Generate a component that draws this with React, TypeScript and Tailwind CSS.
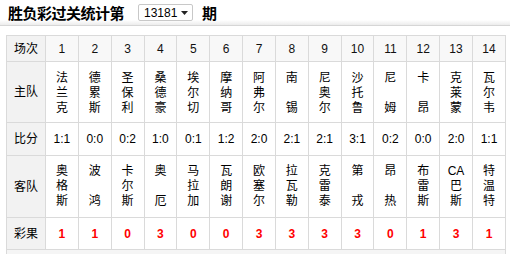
import React from "react";

const home = ["法兰克", "德累斯", "圣保利", "桑德豪", "埃尔切", "摩纳哥", "阿弗尔", "南锡", "尼奥尔", "沙托鲁", "尼姆", "卡昂", "克莱蒙", "瓦尔韦"];
const away = ["奥格斯", "波鸿", "卡尔斯", "奥厄", "马拉加", "瓦朗谢", "欧塞尔", "拉瓦勒", "克雷泰", "第戎", "昂热", "布雷斯", "CA巴斯", "特温特"];
const scores = ["1:1", "0:0", "0:2", "1:0", "0:1", "1:2", "2:0", "2:1", "2:1", "3:1", "0:2", "0:0", "2:0", "1:1"];
const results = ["1", "1", "0", "3", "0", "0", "3", "3", "3", "3", "0", "1", "3", "1"];

function lines(name: string): string[] {
  if (name.startsWith("CA")) return ["CA", name[2], name[3]];
  const chars = Array.from(name);
  if (chars.length === 2) return [chars[0], "\u00a0", chars[1]];
  return chars;
}

function Name({ name }: { name: string }) {
  return (
    <div className="flex flex-col items-center leading-[15px]">
      {lines(name).map((c, i) => (
        <span key={i}>{c}</span>
      ))}
    </div>
  );
}

const label = "border border-[#dadada] bg-[#f2f2f2] text-center text-[12px] text-black";
const cell = "border border-[#dadada] text-center text-[12px]";

export default function App() {
  return (
    <div className="w-[510px] h-[254px] bg-white overflow-hidden" style={{ fontFamily: '"Liberation Sans", "Noto Sans CJK SC", sans-serif' }}>
      <div className="h-[26px] flex items-center pl-[8px] border-b border-[#d6d6d6] bg-gradient-to-b from-white from-80% to-[#ececec]">
        <span className="text-[15px] font-bold text-black leading-none tracking-[-0.5px]" style={{ fontFamily: '"Noto Sans CJK SC", sans-serif' }}>胜负彩过关统计第</span>
        <div className="ml-[14px] w-[55px] h-[17px] border border-[#c8c8c8] rounded-[2px] bg-white flex items-center pl-[5px] pr-[4px] justify-between">
          <span className="text-[12px] text-black leading-none">13181</span>
          <svg width="7" height="4" viewBox="0 0 7 4"><path d="M0 0H7L3.5 4Z" fill="#222" /></svg>
        </div>
        <span className="ml-[9px] text-[15px] font-bold text-black leading-none" style={{ fontFamily: '"Noto Sans CJK SC", sans-serif' }}>期</span>
      </div>
      <div className="pl-[6px] pt-[9px]">
        <table className="border-collapse table-fixed w-[500px]">
          <colgroup>
            <col className="w-[39px]" />
            {home.map((_, i) => (
              <col key={i} />
            ))}
          </colgroup>
          <tbody>
            <tr className="h-[26px]">
              <td className={label}>场次</td>
              {home.map((_, i) => (
                <td key={i} className={`${cell} bg-[#f8f8f8] text-[#111]`}>{i + 1}</td>
              ))}
            </tr>
            <tr className="h-[61px]">
              <td className={label}>主队</td>
              {home.map((n, i) => (
                <td key={i} className={`${cell} pt-[3px] text-black`}><Name name={n} /></td>
              ))}
            </tr>
            <tr className="h-[33px]">
              <td className={label}>比分</td>
              {scores.map((s, i) => (
                <td key={i} className={`${cell} text-black`}>{s}</td>
              ))}
            </tr>
            <tr className="h-[62px]">
              <td className={label}>客队</td>
              {away.map((n, i) => (
                <td key={i} className={`${cell} text-black`}><Name name={n} /></td>
              ))}
            </tr>
            <tr className="h-[32px]">
              <td className={label}>彩果</td>
              {results.map((r, i) => (
                <td key={i} className={`${cell} font-bold text-[#ff0000]`}>{r}</td>
              ))}
            </tr>
            <tr className="h-[12px]">
              <td colSpan={15} className="border border-[#dadada] bg-[#f5f5f5]"></td>
            </tr>
          </tbody>
        </table>
      </div>
    </div>
  );
}
